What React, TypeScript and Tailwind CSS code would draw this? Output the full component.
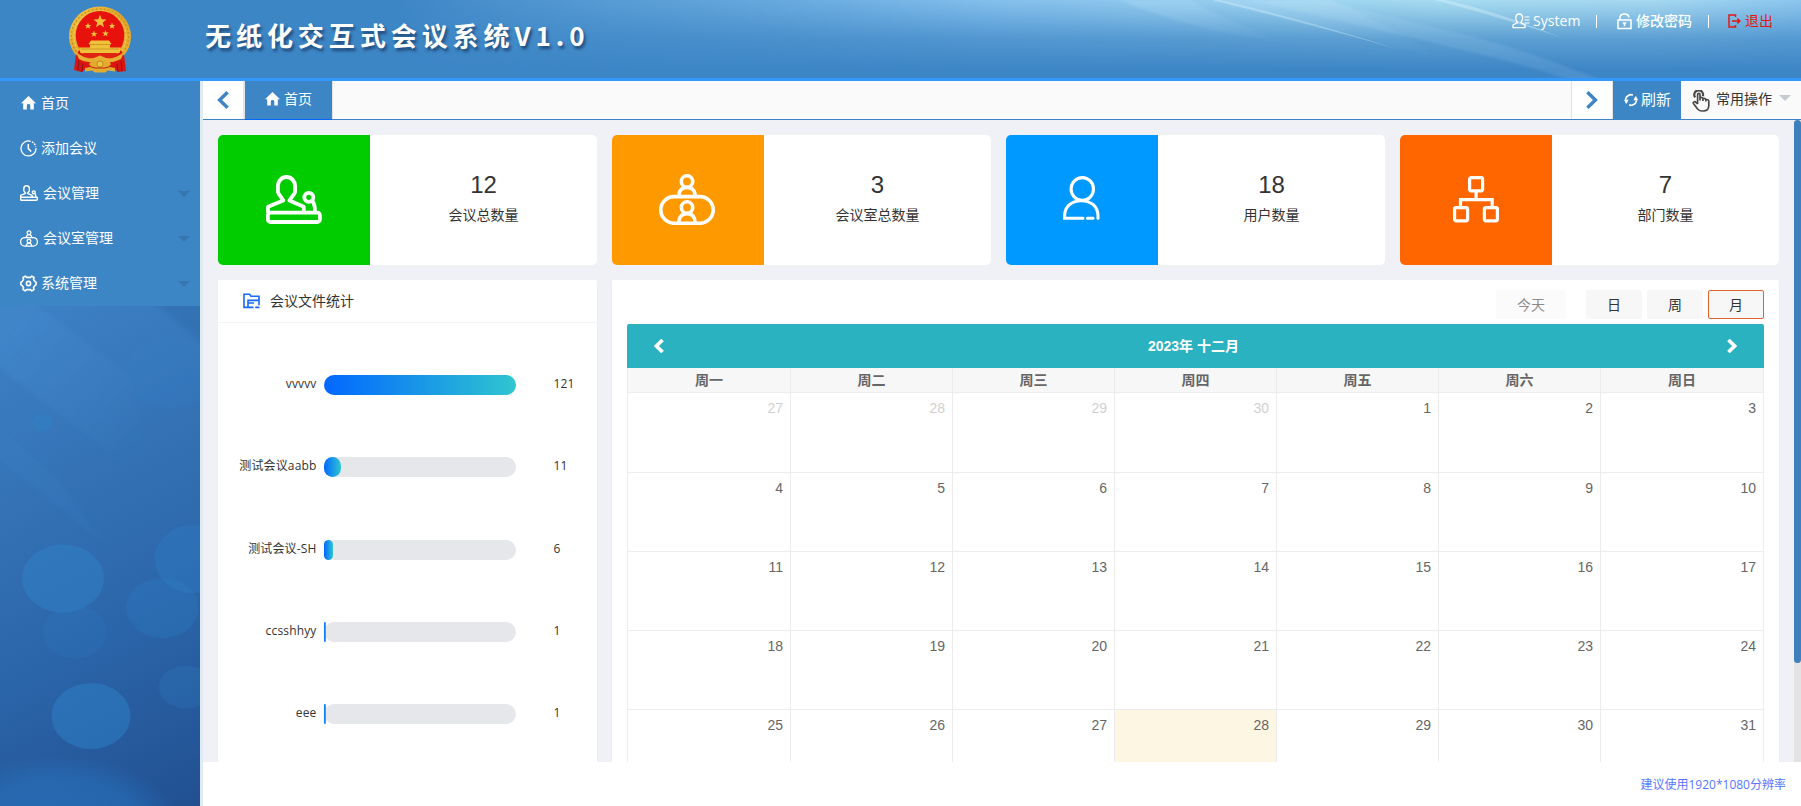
import React from "react";

type IconProps = { className?: string; strokeWidth?: number };

const MeetingIcon = ({ className, strokeWidth = 3.8 }: IconProps) => (
  <svg viewBox="0 0 56 49" fill="none" stroke="currentColor" strokeWidth={strokeWidth} strokeLinejoin="round" className={className}>
    <path d="M2 38V31.8L17.3 25.4L12.6 18.6Q11.9 17.5 11.9 16V11A8.6 9 0 0 1 29.1 11V16Q29.1 17.5 28.4 18.6L23.4 25.4L37.8 31.8V37.5" />
    <rect x="1.9" y="37.6" width="52" height="9.4" rx="2.5" />
    <circle cx="42.8" cy="22.3" r="4.5" />
    <path d="M46.3 25.6Q49.3 30 49 37" />
  </svg>
);

const RoomIcon = ({ className, strokeWidth = 3.6 }: IconProps) => (
  <svg viewBox="0 0 56 51" fill="none" stroke="currentColor" strokeWidth={strokeWidth} className={className}>
    <rect x="1.8" y="22.6" width="52.4" height="26.6" rx="13.3" />
    <ellipse cx="28" cy="7.5" rx="5.7" ry="5.8" />
    <path d="M19.8 22.5C19.8 16.5 23 13.4 28 13.4S36.2 16.5 36.2 22.5" />
    <ellipse cx="28" cy="33.6" rx="5.7" ry="5.8" />
    <path d="M19.8 49C19.8 43 23 39.6 28 39.6S36.2 43 36.2 49" />
  </svg>
);

const UserIcon = ({ className }: IconProps) => (
  <svg viewBox="0 0 38 45" fill="none" stroke="currentColor" strokeWidth="3.1" strokeLinecap="round" className={className}>
    <ellipse cx="20.3" cy="13" rx="11.2" ry="11.4" />
    <path d="M21 42.3H2.6V40C2.6 31 9 24.7 19.3 24.7S36 31 36 40V42.3M25.5 42.3h5.5" />
  </svg>
);

const OrgIcon = ({ className }: IconProps) => (
  <svg viewBox="0 0 48 48" fill="none" stroke="currentColor" strokeWidth="3.2" className={className}>
    <rect x="17.6" y="2.6" width="13" height="13.2" rx="1.5" />
    <rect x="2.6" y="32.6" width="13" height="13.2" rx="1.5" />
    <rect x="32.4" y="32.6" width="13" height="13.2" rx="1.5" />
    <path d="M24.1 16V24.4M8.5 32V24.6H40.2V32" />
  </svg>
);

const HomeIcon = ({ className }: IconProps) => (
  <svg viewBox="0 0 15 14" fill="currentColor" className={className}>
    <path d="M7.5 0L15 7.2H12.8V13.6H9.3V9.2Q9.3 8 7.5 8T5.8 9.2V13.6H2.2V7.2H0Z" />
  </svg>
);

const ClockIcon = ({ className }: IconProps) => (
  <svg viewBox="0 0 17 17" fill="none" stroke="currentColor" strokeWidth="1.3" className={className}>
    <path d="M10.8 1.3A7.5 7.5 0 1 0 16 8" />
    <path d="M12 1.8A7.5 7.5 0 0 1 15.8 6.6" strokeDasharray="1.8 1" />
    <path d="M8.3 4V8.6L11.2 11.6" strokeWidth="1.5" />
  </svg>
);

const GearIcon = ({ className }: IconProps) => (
  <svg viewBox="0 0 17 17" fill="none" stroke="currentColor" strokeWidth="1.6" strokeLinejoin="round" className={className}>
    <path d="M5.2 1.1L6.6 2.4H10.4L11.8 1.1L14 2.5L13.5 4.5L15 6.6L16.1 7.2V9.8L15 10.4L13.5 12.5L14 14.5L11.8 15.9L10.4 14.6H6.6L5.2 15.9L3 14.5L3.5 12.5L2 10.4L0.9 9.8V7.2L2 6.6L3.5 4.5L3 2.5Z" />
    <circle cx="8.5" cy="8.5" r="2.1" />
  </svg>
);

const Chevron = ({ className, dir, w = 3.4 }: { className?: string; dir: "l" | "r"; w?: number }) => (
  <svg viewBox="0 0 12 18" fill="none" stroke="currentColor" strokeWidth={w} className={className}>
    <path d={dir === "l" ? "M10.6 1.2L2.6 9L10.6 16.8" : "M1.4 1.2L9.4 9L1.4 16.8"} />
  </svg>
);

const Caret = ({ className }: IconProps) => (
  <svg viewBox="0 0 12 6" fill="currentColor" className={className}>
    <path d="M0 0H12L6 6Z" />
  </svg>
);

const STAR = "M0 -5L1.3 -1.6L4.9 -1.5L2 0.7L3 4.2L0 2.2L-3 4.2L-2 0.7L-4.9 -1.5L-1.3 -1.6Z";

const Emblem = () => (
  <svg viewBox="0 0 64 68" className="h-[68px] w-[64px]">
    <defs>
      <linearGradient id="gold" x1="0" y1="0" x2="1" y2="1">
        <stop offset="0" stopColor="#f3c843" />
        <stop offset="0.5" stopColor="#dfa42a" />
        <stop offset="1" stopColor="#eab637" />
      </linearGradient>
    </defs>
    <path d="M8 48L56 48L58 65L51 66L46 63L18 63L13 66L6 64Z" fill="#d8150f" />
    <path d="M11 54L10 65M15 56L14 66M53 55L54 65M49 57L50 66" stroke="#8f1010" strokeWidth="1" />
    <ellipse cx="32" cy="30.5" rx="31" ry="30" fill="url(#gold)" />
    <ellipse cx="32" cy="30.5" rx="28.6" ry="27.6" fill="none" stroke="#c48a20" strokeWidth="1.2" strokeDasharray="1.6 2.4" />
    <ellipse cx="32" cy="30.5" rx="26" ry="25.6" fill="none" stroke="#f8d65c" strokeWidth="0.9" strokeDasharray="2.4 2" />
    <ellipse cx="32" cy="29.5" rx="24.3" ry="24.5" fill="#e8120c" />
    <path d="M11 44Q16 51 24 53L20 60Q12 58 8 50ZM53 44Q48 51 40 53L44 60Q52 58 56 50Z" fill="#dd1710" />
    <g fill="#efc03a">
      <path d={STAR} transform="translate(32 15.5) scale(1.35)" />
      <path d={STAR} transform="translate(20 20) scale(.68)" />
      <path d={STAR} transform="translate(44 20) scale(.68)" />
      <path d={STAR} transform="translate(26 28) scale(.68)" />
      <path d={STAR} transform="translate(37.5 27.5) scale(.68)" />
      <path d="M23 34.5H41L43.5 38H42V41.5H53L51.5 47H12.5L11 41.5H22V38H20.5Z" />
    </g>
    <path d="M13 43H51M21 38.5H43" stroke="#c98f22" strokeWidth="0.8" />
    <path d="M14 47H50L46 52H18Z" fill="#df2413" />
    <path d="M8 46Q18 54 26 52L32 49.5L38 52Q46 54 56 46L53 53Q44 57.5 39 55.5Q32 60 25 55.5Q18 57.5 11 53Z" fill="#e6b132" />
    <path d="M23 57L27 54H37L41 57L42 61L47 62V65.5L40 64.5L37 66.5H27L24 64.5L17 65.5V62L22 61Z" fill="#e3ab2d" />
    <circle cx="32" cy="58" r="3" fill="#f0c545" stroke="#b97e1a" strokeWidth="0.8" />
    <path d="M20 60L27 62H37L44 60" fill="none" stroke="#c4261a" strokeWidth="1.2" />
  </svg>
);

const HeaderArt = () => (
  <svg className="absolute inset-0 h-full w-full" viewBox="0 0 1801 78" preserveAspectRatio="none">
    <defs>
      <linearGradient id="hx" x1="0" y1="0" x2="1" y2="0">
        <stop offset="0.22" stopColor="#7cbaea" stopOpacity="0" />
        <stop offset="0.36" stopColor="#6fb0e2" stopOpacity="0.6" />
        <stop offset="0.55" stopColor="#84bfec" />
        <stop offset="0.8" stopColor="#a8dcf0" />
        <stop offset="0.92" stopColor="#a6d8f0" />
        <stop offset="1" stopColor="#8cc6ee" />
      </linearGradient>
      <linearGradient id="hy" x1="0" y1="0" x2="0" y2="1">
        <stop offset="0" stopColor="#fff" />
        <stop offset="0.12" stopColor="#fff" stopOpacity="0.85" />
        <stop offset="0.5" stopColor="#fff" stopOpacity="0.3" />
        <stop offset="0.9" stopColor="#fff" stopOpacity="0" />
      </linearGradient>
      <linearGradient id="ray" x1="0" y1="0" x2="1" y2="1">
        <stop offset="0" stopColor="#d8f3ff" stopOpacity="0.12" />
        <stop offset="1" stopColor="#b9dcff" stopOpacity="0.12" />
      </linearGradient>
      <linearGradient id="ray2" x1="0" y1="0" x2="1" y2="1">
        <stop offset="0" stopColor="#d8f3ff" stopOpacity="0.2" />
        <stop offset="1" stopColor="#b9dcff" stopOpacity="0" />
      </linearGradient>
      <mask id="fade">
        <rect width="1801" height="78" fill="url(#hy)" />
      </mask>
      <filter id="soft" x="-5%" y="-20%" width="110%" height="140%">
        <feGaussianBlur stdDeviation="1.2" />
      </filter>
    </defs>
    <rect width="1801" height="78" fill="url(#hx)" mask="url(#fade)" />
    <g filter="url(#soft)">
      <path d="M1120 0Q1190 30 1290 44Q1220 18 1190 0Z" fill="url(#ray2)" />
      <path d="M1212 0Q1330 30 1440 58Q1400 30 1330 0Z" fill="url(#ray2)" />
      <path d="M1250 0Q1400 34 1480 54T1572 82H1606Q1510 44 1450 31T1330 0Z" fill="url(#ray)" />
    </g>
    <path d="M1212 0Q1310 24 1400 50Q1310 21 1220 0Z" fill="#e8fbff" opacity="0.28" />
    <path d="M1435 0Q1500 17 1562 38Q1500 12 1445 0Z" fill="#e8fbff" opacity="0.32" />
  </svg>
);

const SidebarArt = () => (
  <svg className="absolute inset-0 h-full w-full" viewBox="0 306 200 500" preserveAspectRatio="none">
    <defs>
      <linearGradient id="sb" gradientUnits="userSpaceOnUse" x1="0" y1="340" x2="230" y2="790">
        <stop offset="0" stopColor="#3c7fc3" />
        <stop offset="0.3" stopColor="#3472b5" />
        <stop offset="0.62" stopColor="#2b65a9" />
        <stop offset="1" stopColor="#215091" />
      </linearGradient>
      <radialGradient id="glow">
        <stop offset="0" stopColor="#2877c4" stopOpacity="0.7" />
        <stop offset="0.7" stopColor="#2877c4" stopOpacity="0.45" />
        <stop offset="1" stopColor="#2877c4" stopOpacity="0" />
      </radialGradient>
      <linearGradient id="beam" x1="0" y1="0" x2="0.9" y2="0.8">
        <stop offset="0" stopColor="#4793d3" stopOpacity="0.35" />
        <stop offset="1" stopColor="#4793d3" stopOpacity="0" />
      </linearGradient>
      <filter id="haze" x="-10%" y="-10%" width="120%" height="120%">
        <feGaussianBlur stdDeviation="2" />
      </filter>
    </defs>
    <rect y="306" width="200" height="500" fill="url(#sb)" />
    <g filter="url(#haze)">
      <path d="M-10 296H26L130 376L160 492L0 368L-10 360Z" fill="url(#beam)" />
      <path d="M-10 452L105 545L60 480L-10 420Z" fill="#4d9bda" opacity="0.08" />
      <path d="M150 300H210V348Z" fill="#235a9d" opacity="0.25" />
    </g>
    <ellipse cx="60" cy="835" rx="125" ry="80" fill="url(#glow)" />
    <g fill="#2f86cc">
      <ellipse cx="170" cy="372" rx="45" ry="36" opacity="0.14" />
      <ellipse cx="42.5" cy="423" rx="10.5" ry="8.5" opacity="0.35" />
      <ellipse cx="63" cy="578.5" rx="41" ry="34" opacity="0.4" />
      <ellipse cx="75" cy="632" rx="32" ry="26.5" opacity="0.14" />
      <ellipse cx="193" cy="559" rx="38.5" ry="34" opacity="0.28" />
      <ellipse cx="162.5" cy="608" rx="36" ry="30" opacity="0.24" />
      <ellipse cx="91" cy="716" rx="39.5" ry="33" opacity="0.45" />
      <ellipse cx="186" cy="687" rx="27" ry="21.5" opacity="0.2" />
    </g>
  </svg>
);

const menu = [
  { label: "首页", icon: <HomeIcon className="-mt-[2px] mr-[5px] h-[14px] w-[15px]" />, sub: false },
  { label: "添加会议", icon: <ClockIcon className="-ml-px -mt-px mr-[4px] h-[17px] w-[17px]" />, sub: false },
  { label: "会议管理", icon: <MeetingIcon strokeWidth={4.4} className="-ml-px -mt-[2px] mr-[5px] h-[16px] w-[18px]" />, sub: true },
  { label: "会议室管理", icon: <RoomIcon strokeWidth={4} className="-ml-px -mt-px mr-[5px] h-[17px] w-[18px]" />, sub: true },
  { label: "系统管理", icon: <GearIcon className="-ml-px -mt-px mr-[4px] h-[17px] w-[17px]" />, sub: true },
];

const stats = [
  { value: 12, label: "会议总数量", bg: "bg-[#00cc00]", icon: <MeetingIcon className="mb-[2px] h-[49px] w-[56px]" /> },
  { value: 3, label: "会议室总数量", bg: "bg-[#ff9900]", icon: <RoomIcon className="mb-[2px] mr-[2px] h-[51px] w-[56px]" /> },
  { value: 18, label: "用户数量", bg: "bg-[#0099ff]", icon: <UserIcon className="-ml-[2px] mb-[3px] h-[45px] w-[38px]" /> },
  { value: 7, label: "部门数量", bg: "bg-[#ff6600]", icon: <OrgIcon className="mb-[2px] h-[48px] w-[48px]" /> },
];

const files = [
  { name: "vvvvv", count: 121 },
  { name: "测试会议aabb", count: 11 },
  { name: "测试会议-SH", count: 6 },
  { name: "ccsshhyy", count: 1 },
  { name: "eee", count: 1 },
];

const weekdays = ["周一", "周二", "周三", "周四", "周五", "周六", "周日"];
const days = [27, 28, 29, 30, ...Array.from({ length: 31 }, (_, i) => i + 1)];

export default function App() {
  return (
    <div className="flex h-[806px] w-[1801px] flex-col overflow-hidden bg-white font-['Liberation_Sans','Noto_Sans_CJK_SC',sans-serif] text-[14px] leading-5 text-[#333]">
      <header className="relative flex h-[81px] shrink-0 border-b-[3px] border-[#3399ff] bg-[#3d86c6]">
        <HeaderArt />
        <div className="relative ml-[68px] mt-[6px]">
          <Emblem />
        </div>
        <h1 className="relative ml-[73px] mt-[15px] whitespace-nowrap font-['Noto_Sans_CJK_SC',sans-serif] text-[26px] font-bold leading-[40px] tracking-[4.95px] text-white [text-shadow:2px_3px_3px_rgba(20,50,90,0.7)]">
          无纸化交互式会议系统V1.0
        </h1>
        <nav className="relative ml-auto mr-[28px] mt-[11px] flex h-5 items-center font-['Open_Sans','Noto_Sans_CJK_SC',sans-serif] font-medium text-white">
          <svg viewBox="0 0 18 16" fill="none" stroke="currentColor" strokeWidth="1.3" className="mr-[3px] h-[16px] w-[18px]">
            <path d="M1 14.6V12L5.6 9.6Q3.8 7.5 3.8 5Q3.8 1 7.2 1T10.6 5Q10.6 7.5 8.8 9.6L13 12V14.6Z" />
            <path d="M12.5 4H17.5M12.5 7H17.5M12.5 10H17.5" strokeWidth="1.1" />
          </svg>
          <span className="w-[47px] whitespace-nowrap tracking-[0.05px]">System</span>
          <i className="ml-[16px] h-[13px] w-px bg-white" />
          <svg viewBox="0 0 15 17" fill="none" stroke="currentColor" strokeWidth="1.5" className="ml-[20px] mr-[5px] h-[17px] w-[15px]">
            <path d="M1 7H14V15.5H1ZM3 7V4.6Q3 1 7.4 1T11.8 4.4" />
            <path d="M5.8 10H9.2M7.5 10V13.2" />
          </svg>
          <span className="-ml-px mr-px">修改密码</span>
          <i className="ml-[15px] h-[13px] w-px bg-white" />
          <svg viewBox="0 0 13 14" fill="none" stroke="#e21a12" strokeWidth="1.5" className="ml-[19px] mr-[4px] h-[14px] w-[13px]">
            <path d="M7.5 3V1H1V13H7.5V11M4 7H11.5M9.4 4.6L11.8 7L9.4 9.4" />
          </svg>
          <span className="font-normal text-[#e21a12]">退出</span>
        </nav>
      </header>

      <div className="flex min-h-0 flex-1">
        <aside className="flex w-[200px] shrink-0 flex-col">
          <ul className="shrink-0 bg-[#3d86c6]">
            {menu.map((m) => (
              <li key={m.label} className="flex h-[45px] items-center pl-[21px] pr-[10px] text-white">
                {m.icon}
                <span className="-mt-px">{m.label}</span>
                {m.sub && <Caret className="ml-auto mt-px h-[6px] w-[12px] text-[#3775ae]" />}
              </li>
            ))}
          </ul>
          <div className="relative flex-1 overflow-hidden">
            <SidebarArt />
          </div>
        </aside>
        <div className="w-[3px] shrink-0 bg-[#e1eaf1]" />

        <div className="flex min-w-0 flex-1 flex-col">
          <div className="flex h-[39px] shrink-0 border-b border-[#3d85c6] bg-[#fafafa]">
            <div className="flex w-[42px] items-center justify-center border-r-2 border-[#e2e5ea] bg-white pb-px pr-[2px] text-[#3d85c6]">
              <Chevron dir="l" className="ml-[2px] h-[18px] w-[12px]" />
            </div>
            <div className="mb-[-1px] flex w-[87px] items-center border-b border-[#0066ff] bg-[#3d86c6] pb-[3px] pl-[20px] text-white">
              <HomeIcon className="mr-[4px] h-[14px] w-[15px]" />
              <span>首页</span>
            </div>
            <div className="w-px bg-[#e2e2e2]" />
            <div className="ml-auto flex w-[42px] items-center justify-center border-x border-[#e2e2e2] bg-white pb-px text-[#3d85c6]">
              <Chevron dir="r" className="h-[18px] w-[12px]" />
            </div>
            <div className="flex w-[68px] items-center bg-[#3d86c6] pb-px pl-[11px] text-[15px] text-white">
              <svg viewBox="0 0 14 14" fill="none" stroke="currentColor" strokeWidth="1.7" className="mr-[3px] h-[14px] w-[14px]">
                <path d="M2.6 10.2A5.2 5.2 0 0 1 4.3 2.4Q6.4 1.2 8.8 2.1M11.4 3.8A5.2 5.2 0 0 1 9.7 11.6Q7.6 12.8 5.2 11.9" />
                <path d="M0 7.2L4.6 6.6L2.8 10.4ZM14 6.8L9.4 7.4L11.2 3.6Z" fill="currentColor" stroke="none" />
              </svg>
              <span>刷新</span>
            </div>
            <div className="flex w-[120px] items-center bg-[#fafafa] pb-px pl-[11px]">
              <svg viewBox="0 0 18 22" fill="none" stroke="#4a4a4a" strokeWidth="1.7" strokeLinejoin="round" className="mr-[6px] mt-[2px] h-[22px] w-[18px]">
                <path d="M3.2 7.4A4.4 4.4 0 1 1 10.8 6.2" strokeWidth="2.2" />
                <path d="M5.6 14V4.6Q5.6 3.3 6.8 3.3T8 4.6V10M8 10.4V8.2Q8 7.4 9.3 7.4T10.9 8.6V11M10.9 9.3Q11 8.3 12.2 8.3T13.9 9.6V11.4M13.9 10Q14.2 9.4 15.2 9.5T16.8 11V15.5Q16.8 21 11.2 21H10Q7.4 21 5.8 19.2L1.4 13.4Q0.9 12.4 2 11.9T4 12.4L5.6 14" />
              </svg>
              <span className="-mt-px">常用操作</span>
              <Caret className="mb-[3px] ml-[7px] h-[6px] w-[12px] text-[#c6cad1]" />
            </div>
          </div>

          <div className="flex h-[642px] shrink-0 overflow-hidden bg-[#f0f1f7]">
            <main className="flex w-[1576px] shrink-0 flex-col gap-[15px] pl-[15px] pt-[15px]">
              <section className="grid shrink-0 grid-cols-4 gap-[15px]">
                {stats.map((s) => (
                  <div key={s.label} className="flex h-[130px] overflow-hidden rounded-[5px] bg-white">
                    <div className={`flex w-[152px] items-center justify-center text-white ${s.bg}`}>{s.icon}</div>
                    <div className="flex flex-1 flex-col items-center pt-[35px]">
                      <b className="text-[24px] font-normal leading-[30px]">{s.value}</b>
                      <span className="mt-[5px]">{s.label}</span>
                    </div>
                  </div>
                ))}
              </section>

              <section className="flex min-h-0 flex-1 gap-[15px]">
                <div className="w-[379px] shrink-0 rounded-t-[2px] bg-white shadow-[0_1px_2px_rgba(0,0,0,0.05)]">
                  <div className="flex h-[43px] items-center border-b border-[#f4f4f6] pl-[25px]">
                    <svg viewBox="0 0 17 16" fill="none" stroke="#1768ff" strokeWidth="1.6" className="mr-[10px] h-[16px] w-[17px]">
                      <path d="M4.6 14.4H1V1.2H6.6L8 3.2H16V8.4M5 14.8V7.4H16V12.2M5 10H11M4.6 14.4H10.5M12.2 14.4H16.4" />
                    </svg>
                    <span>会议文件统计</span>
                  </div>
                  <div className="flex flex-col pt-[21px] font-['Open_Sans','Noto_Sans_CJK_SC',sans-serif] text-[12px]">
                    {files.map((f) => (
                      <div key={f.name} className="flex h-[82.3px] shrink-0 items-center">
                        <span className="mb-[2px] w-[98.5px] whitespace-nowrap text-right tracking-[0.15px]">{f.name}</span>
                        <div className="ml-[7.5px] h-[20px] w-[191.5px] rounded-full bg-[#e6e7eb]">
                          <div
                            className="h-full rounded-full bg-[linear-gradient(90deg,#0267ff,#2fc6cf)]"
                            style={{ width: `${(f.count / 121) * 100}%` }}
                          />
                        </div>
                        <span className="mb-[2px] ml-[38px] tracking-[0.15px]">{f.count}</span>
                      </div>
                    ))}
                  </div>
                </div>

                <div className="flex-1 rounded-t-[2px] bg-white px-[15px] pt-[10px] shadow-[0_1px_2px_rgba(0,0,0,0.05)]">
                  <div className="flex h-[29px] justify-end">
                    <button className="w-[70px] rounded-[2px] bg-[#fbfbfb] text-[#8c8c8c]">今天</button>
                    <button className="ml-[20px] w-[56px] rounded-[2px] bg-[#f7f7f7]">日</button>
                    <button className="ml-[5px] w-[56px] rounded-[2px] bg-[#f7f7f7]">周</button>
                    <button className="ml-[5px] w-[56px] rounded-[2px] border border-[#e2622a] bg-[#f7f7f7]">月</button>
                  </div>
                  <div className="mt-[5px] flex h-[44px] items-center justify-between rounded-t-[2px] bg-[#2bb2c1] px-[27px] text-white">
                    <Chevron dir="l" w={4.6} className="h-[14px] w-[10px]" />
                    <b className="-ml-[4px]">2023年 十二月</b>
                    <Chevron dir="r" w={4.6} className="h-[14px] w-[10px]" />
                  </div>
                  <div className="grid grid-cols-[163px_repeat(5,162px)_163px] border-l border-[#ececec] text-[#666]">
                    {weekdays.map((d) => (
                      <div key={d} className="flex h-[25px] items-center justify-center border-b border-r border-[#ececec] bg-[#f7f7f7] pb-px font-semibold">
                        {d}
                      </div>
                    ))}
                    {days.map((d, i) => (
                      <div
                        key={i}
                        className={`border-b border-r border-[#ececec] pr-[7px] text-right ${i < 7 ? "h-[80px] pt-[5px]" : "h-[79px] pt-[5px]"} ${i < 4 ? "text-[#d1d1d1]" : ""} ${i === 31 ? "bg-[#fcf6e3]" : ""}`}
                      >
                        {d}
                      </div>
                    ))}
                  </div>
                </div>
              </section>
            </main>
            <div className="ml-auto w-[7px] bg-[#e3e3e3]">
              <div className="h-[543px] rounded-[4px] bg-[#3d80bd]" />
            </div>
          </div>

          <footer className="flex flex-1 items-center justify-end bg-white pr-[15px] pt-[2px] font-['Open_Sans','Noto_Sans_CJK_SC',sans-serif] text-[12px] text-[#5577ff]">
            建议使用1920*1080分辨率
          </footer>
        </div>
      </div>
    </div>
  );
}
